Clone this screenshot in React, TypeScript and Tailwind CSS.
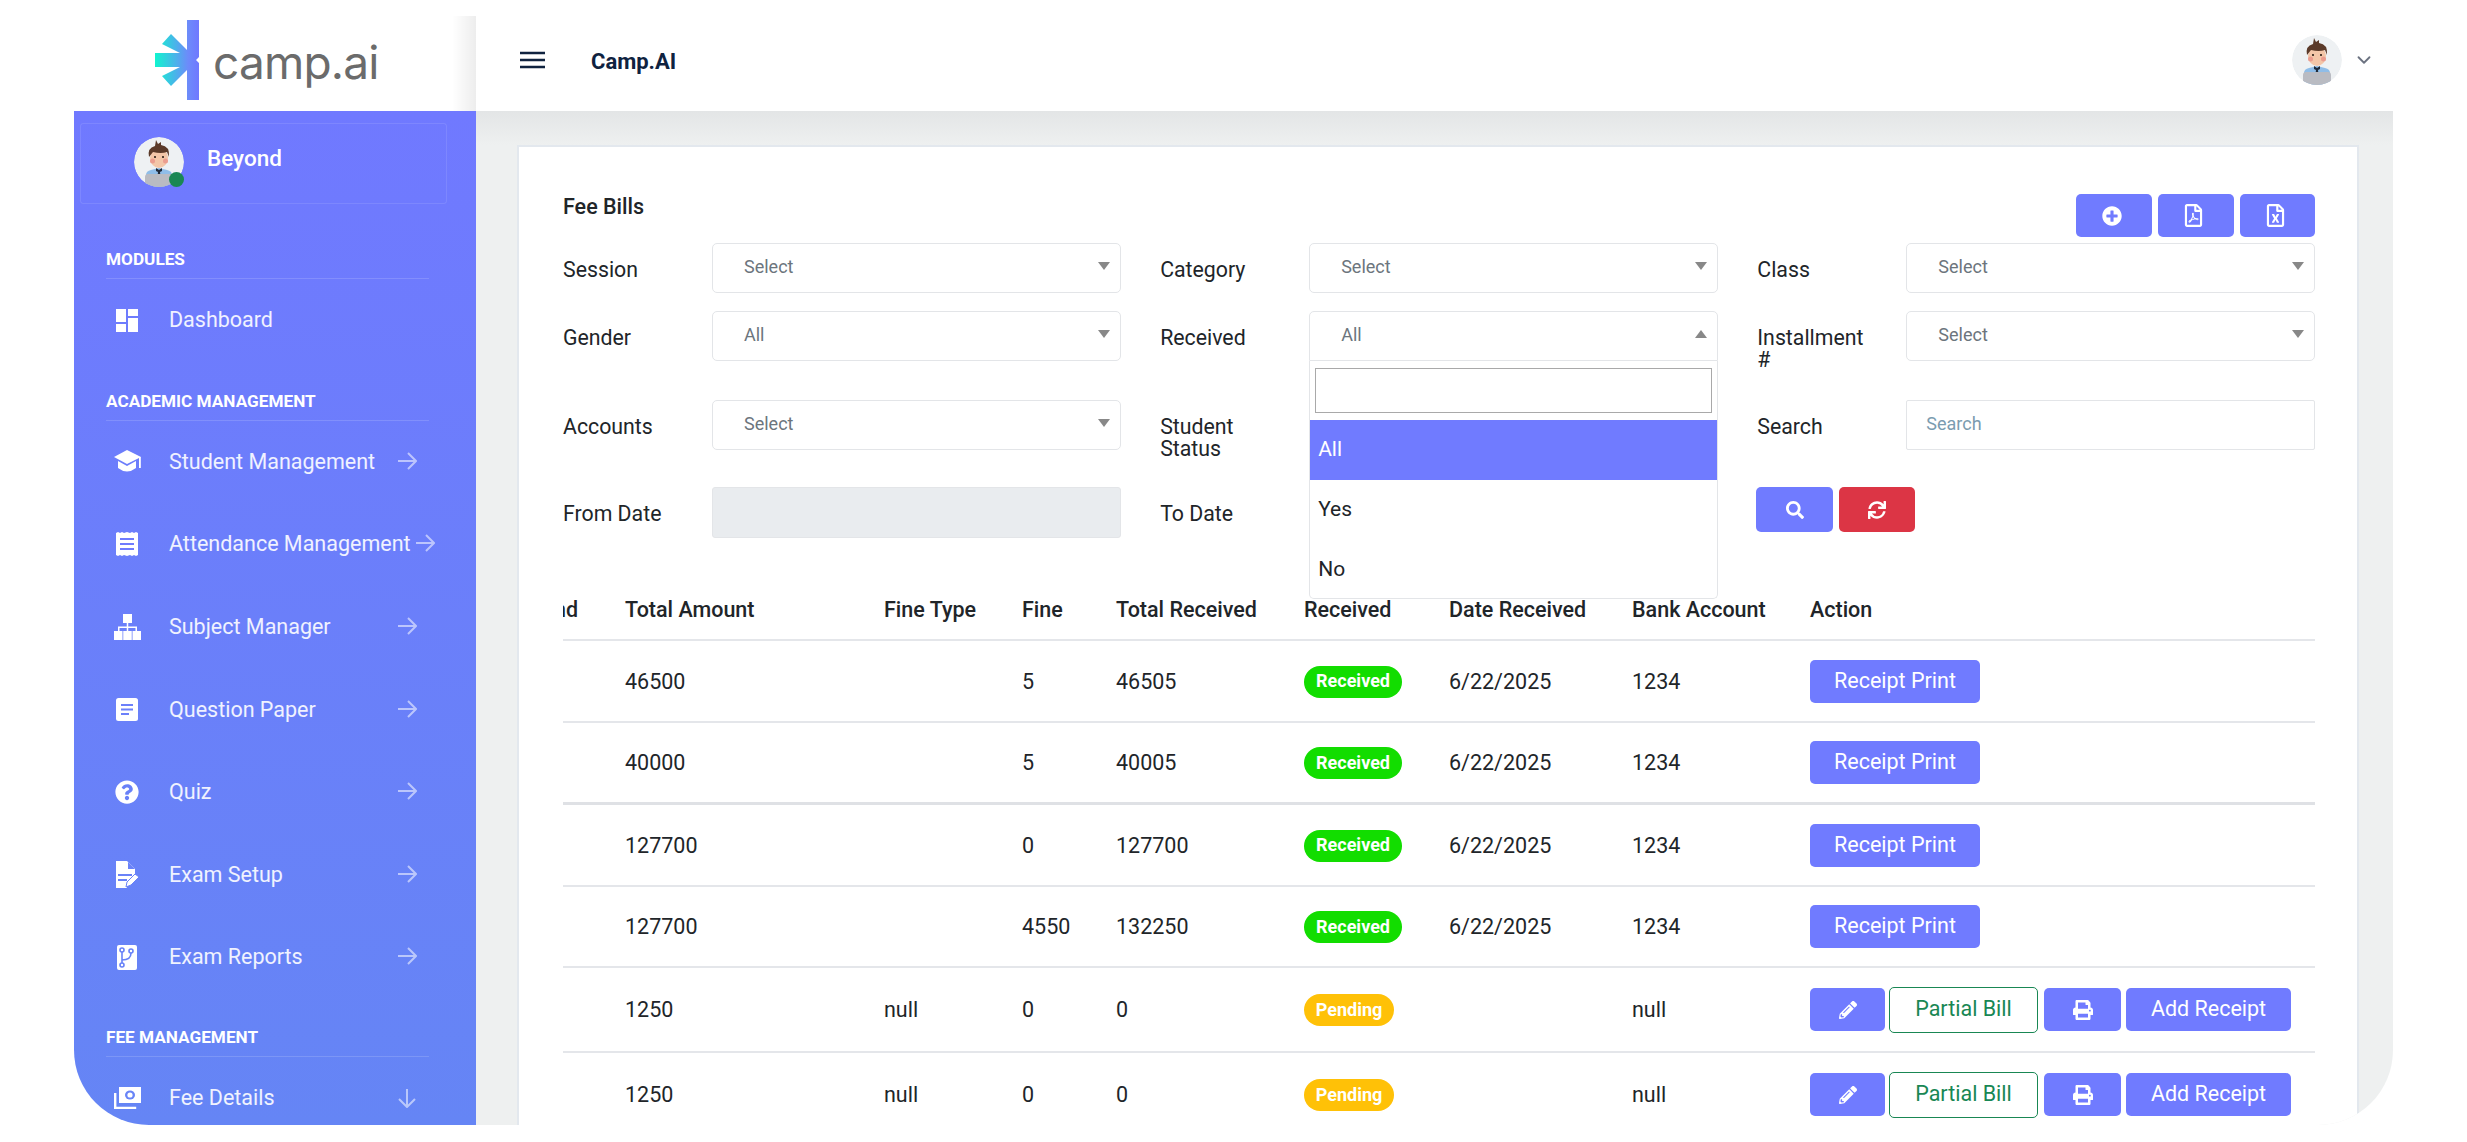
import React from "react";
import { FaQuestionCircle, FaPlusCircle, FaRegFilePdf, FaRegFileExcel, FaSearch, FaSync, FaPencilAlt, FaPrint } from "react-icons/fa";
import { ChevronDown } from "lucide-react";

function Avatar({ size, dot }: { size: number; dot?: boolean }) {
  return (
    <div className="relative shrink-0" style={{ width: size, height: size }}>
      <svg viewBox="0 0 50 50" width={size} height={size}>
        <defs>
          <clipPath id={dot ? "avc1" : "avc2"}><circle cx="25" cy="25" r="25" /></clipPath>
        </defs>
        <g clipPath={`url(#${dot ? "avc1" : "avc2"})`}>
          <circle cx="25" cy="25" r="25" fill="#eef1f3" />
          <path d="M12 50V38q0-4 5-5l8-2 8 2q5 1 5 5v12z" fill="#8fbde8" />
          <path d="M22 31l3 2 3-2 0 3-2 1 1 8h-4l1-8-2-1z" fill="#1f2a3a" />
          <rect x="11" y="37" width="28" height="14" rx="3" fill="#b9bbc2" />
          <ellipse cx="25" cy="21" rx="9" ry="10" fill="#f3c6a8" />
          <circle cx="18.5" cy="24" r="2.5" fill="#eb9d8f" />
          <circle cx="31.5" cy="24" r="2.5" fill="#eb9d8f" />
          <circle cx="21" cy="20" r="1.1" fill="#2b1d16" />
          <circle cx="29" cy="20" r="1.1" fill="#2b1d16" />
          <path d="M15 20q-2-9 6-11l1-6 2 4 3-2 0 3q9 1 8 12l-2-5q-6 2-14 0z" fill="#5b3a29" />
        </g>
      </svg>
      {dot && <div className="absolute right-0 bottom-0 w-[15px] h-[15px] rounded-full bg-[#198754]" />}
    </div>
  );
}

function Logo() {
  return (
    <svg width="45" height="80" viewBox="0 0 45 80" className="shrink-0">
      <defs>
        <linearGradient id="lg" x1="0" x2="1" y1="0" y2="0">
          <stop offset="0" stopColor="#10f5cf" />
          <stop offset="0.75" stopColor="#6d8bfa" />
          <stop offset="1" stopColor="#6f78ff" />
        </linearGradient>
      </defs>
      <path
        fill="url(#lg)"
        d="M32 0H44V37L41 40L44 43V80H32V50L16 66L7 56L25 47H0V33H25L7 24L16 14L32 30Z"
      />
    </svg>
  );
}

const Dash = () => (
  <svg width="22" height="23" viewBox="0 0 22 23" fill="#fff">
    <rect x="0" y="0" width="10" height="13" />
    <rect x="12" y="0" width="10" height="7" />
    <rect x="0" y="15" width="10" height="8" />
    <rect x="12" y="9" width="10" height="14" />
  </svg>
);
const Cap = () => (
  <svg width="27" height="24" viewBox="0 0 27 24" fill="#fff">
    <path d="M13 0L27 7L13 14L0 7z" />
    <path d="M4 11L13 16L22 11V18Q13 25 4 18z" />
    <rect x="25" y="7" width="1.8" height="11" />
  </svg>
);
const Sitemap = () => (
  <svg width="27" height="26" viewBox="0 0 27 26" fill="#fff">
    <rect x="9" y="0" width="9" height="9" />
    <rect x="0" y="17" width="8.5" height="9" />
    <rect x="9.25" y="17" width="8.5" height="9" />
    <rect x="18.5" y="17" width="8.5" height="9" />
    <path d="M12.75 9h1.5v3.5H23V17h-1.5v-3h-7.25v3h-1.5v-3H5.5v3H4v-4.5h8.75z" />
  </svg>
);
const Receipt = () => (
  <svg width="22" height="24" viewBox="0 0 22 24">
    <path fill="#fff" d="M0 1l2-1 2 1 2-1 2 1 3-1 3 1 2-1 2 1 2-1 2 1v22l-2 1-2-1-2 1-2-1-3 1-3-1-2 1-2-1-2 1-2-1z" />
    <path stroke="#6f7bfe" strokeWidth="2" d="M4 7h14M4 12h14M4 17h14" />
  </svg>
);
const Paper = () => (
  <svg width="22" height="23" viewBox="0 0 22 23">
    <rect width="22" height="23" rx="2.5" fill="#fff" />
    <path stroke="#6c80fa" strokeWidth="2" d="M5 7h12M5 11.5h12M5 16h8" />
  </svg>
);
const ExamSetup = () => (
  <svg width="24" height="27" viewBox="0 0 24 27">
    <path fill="#fff" d="M1 0h11l8 8v8l-8 8v3H1z" />
    <path fill="#6a82f8" d="M13 1v7h7zM3 13h14v2H3zM3 18h9v2H3z" />
    <path fill="#fff" stroke="#6a82f8" d="M11 26l1-5 8-8 4 3-8 8z" />
  </svg>
);
const ExamReports = () => (
  <svg width="20" height="25" viewBox="0 0 20 25">
    <rect width="20" height="25" rx="2" fill="#fff" />
    <g fill="none" stroke="#6882f8" strokeWidth="1.6">
      <circle cx="5" cy="5" r="2" />
      <circle cx="5" cy="20" r="2" />
      <circle cx="14" cy="6" r="2" />
      <path d="M5 7v11M5 15q9 0 9-7" />
    </g>
  </svg>
);
const Money = () => (
  <svg width="27" height="22" viewBox="0 0 27 22">
    <path fill="none" stroke="#fff" strokeWidth="2.4" d="M1.2 6v15h21" />
    <rect x="5" y="0" width="22" height="16" fill="#fff" />
    <ellipse cx="16" cy="8" rx="5" ry="4.5" fill="#6884f7" />
    <ellipse cx="16" cy="8" rx="2.6" ry="2.6" fill="#fff" />
  </svg>
);
const ArrowR = () => (
  <svg width="20" height="20" viewBox="0 0 20 20" fill="none" stroke="#ffffff" strokeOpacity="0.55" strokeWidth="2" className="shrink-0 mb-[2px]">
    <path d="M1 10H19M11 2l8 8-8 8" />
  </svg>
);
const ArrowD = () => (
  <svg width="20" height="20" viewBox="0 0 20 20" fill="none" stroke="#ffffff" strokeOpacity="0.55" strokeWidth="2" className="shrink-0 ml-[2px]">
    <path d="M10 1V19M2 11l8 8 8-8" />
  </svg>
);

function NavItem({ icon, label, down, noArrow }: { icon: React.ReactNode; label: string; down?: boolean; noArrow?: boolean }) {
  return (
    <div className="h-[82.6px] pl-[32px] pr-[59px] flex items-center text-[21.5px] text-white/90 whitespace-nowrap">
      <div className="w-[42px] flex justify-center shrink-0">{icon}</div>
      <span className="ml-[21px]">{label}</span>
      <span className="ml-auto pl-[4px] shrink-0">{noArrow ? null : down ? <ArrowD /> : <ArrowR />}</span>
    </div>
  );
}

function SectionHead({ label, className }: { label: string; className: string }) {
  return (
    <div className={`ml-[32px] w-[323px] h-[35px] border-b border-white/15 text-[17.2px] font-bold text-white leading-[24px] pt-[3px] ${className}`}>{label}</div>
  );
}

function Caret({ up }: { up?: boolean }) {
  return (
    <svg width="12" height="8" viewBox="0 0 12 8" className="ml-auto shrink-0" fill="#888">
      {up ? <path d="M6 0l6 8H0z" /> : <path d="M0 0h12L6 8z" />}
    </svg>
  );
}

function Select({ value, open }: { value: string; open?: boolean }) {
  return (
    <div className={`h-[50px] border border-[#e3e5e8] bg-white flex items-center pl-[31px] pr-[10px] pb-[4px] text-[18px] text-[#6c757d] ${open ? "rounded-t-[5px]" : "rounded-[5px]"}`}>
      <span>{value}</span>
      <Caret up={open} />
    </div>
  );
}

function Field({ label, children }: { label: React.ReactNode; children: React.ReactNode }) {
  return (
    <div className="flex items-start">
      <div className="w-[149px] shrink-0 pt-[16px] pr-[30px] text-[21.3px] leading-[22px] text-[#212529]">{label}</div>
      <div className="flex-1 min-w-0 relative">{children}</div>
    </div>
  );
}

const blue = "bg-[#707bff] text-white rounded-[5px] flex items-center justify-center shrink-0";

function Badge({ kind }: { kind: "r" | "p" }) {
  return kind === "r" ? (
    <span className="inline-flex items-center justify-center w-[98px] h-[32px] pb-[2px] rounded-full bg-[#12dd00] text-white text-[18px] font-bold">Received</span>
  ) : (
    <span className="inline-flex items-center justify-center w-[90px] h-[32px] pb-[2px] rounded-full bg-[#ffc107] text-white text-[18px] font-bold">Pending</span>
  );
}

type Row = { amt: string; ft: string; fine: string; tr: string; kind: "r" | "p"; date: string; bank: string; h: string; thick?: boolean };
const rows: Row[] = [
  { amt: "46500", ft: "", fine: "5", tr: "46505", kind: "r", date: "6/22/2025", bank: "1234", h: "h-[82px]" },
  { amt: "40000", ft: "", fine: "5", tr: "40005", kind: "r", date: "6/22/2025", bank: "1234", h: "h-[82px]", thick: true },
  { amt: "127700", ft: "", fine: "0", tr: "127700", kind: "r", date: "6/22/2025", bank: "1234", h: "h-[82px]" },
  { amt: "127700", ft: "", fine: "4550", tr: "132250", kind: "r", date: "6/22/2025", bank: "1234", h: "h-[81px]" },
  { amt: "1250", ft: "null", fine: "0", tr: "0", kind: "p", date: "", bank: "null", h: "h-[85px]" },
  { amt: "1250", ft: "null", fine: "0", tr: "0", kind: "p", date: "", bank: "null", h: "h-[85px]" },
];

const headers = ["Total Amount", "Fine Type", "Fine", "Total Received", "Received", "Date Received", "Bank Account", "Action"];

export default function App() {
  return (
    <div className="w-full h-[1142px] bg-white px-[74px] font-[Roboto,sans-serif] overflow-hidden">
      <div className="h-[1125px] flex rounded-b-[75px] overflow-hidden">
        {/* left column */}
        <div className="w-[402px] shrink-0 flex flex-col">
          <div className="mt-[16px] h-[95px] pb-[7px] flex items-center pl-[81px] bg-[linear-gradient(to_left,rgba(0,0,0,0.07),transparent_24px)]">
            <Logo />
            <span className="ml-[13px] mt-[3px] font-[Inter,sans-serif] text-[46px] tracking-[-0.8px] text-[#6b6b6b] leading-none">camp.ai</span>
          </div>
          <div className="flex-1 bg-[linear-gradient(to_bottom,#7079ff,#6585f5)] pt-[12px] overflow-hidden">
            <div className="ml-[6px] w-[367px] h-[81px] border border-white/10 rounded-[3px] flex items-center pl-[53px] pb-[4px]">
              <Avatar size={50} dot />
              <span className="ml-[23px] mb-[6px] text-[22.5px] font-medium text-white">Beyond</span>
            </div>
            <SectionHead label="MODULES" className="mt-[40px]" />
            <NavItem icon={<Dash />} label="Dashboard" noArrow />
            <SectionHead label="ACADEMIC MANAGEMENT" className="mt-[24px]" />
            <NavItem icon={<Cap />} label="Student Management" />
            <NavItem icon={<Receipt />} label="Attendance Management" />
            <NavItem icon={<Sitemap />} label="Subject Manager" />
            <NavItem icon={<Paper />} label="Question Paper" />
            <NavItem icon={<FaQuestionCircle size={24} color="#fff" />} label="Quiz" />
            <NavItem icon={<ExamSetup />} label="Exam Setup" />
            <NavItem icon={<ExamReports />} label="Exam Reports" />
            <SectionHead label="FEE MANAGEMENT" className="mt-[23px]" />
            <NavItem icon={<Money />} label="Fee Details" down />
          </div>
        </div>

        {/* right column */}
        <div className="flex-1 min-w-0 flex flex-col">
          <header className="relative z-10 mt-[16px] h-[95px] shrink-0 bg-white flex items-center pl-[44px] pr-[18px] pb-[7px]">
            <svg width="25" height="18" viewBox="0 0 25 18" stroke="#10233f" strokeWidth="2.4">
              <path d="M0 2h25M0 9h25M0 16h25" />
            </svg>
            <span className="ml-[46px] mt-[2px] text-[22px] font-bold text-[#0f2240]">Camp.AI</span>
            <div className="ml-auto flex items-center">
              <Avatar size={50} />
              <ChevronDown size={22} color="#6b7280" className="ml-[11px]" />
            </div>
          </header>
          <main className="flex-1 min-h-0 bg-[linear-gradient(to_bottom,#e3e5e6,#eef0f0_34px)] pl-[41px] pr-[34px] pt-[34px]">
            <div className="h-full bg-white border-t-2 border-x-2 border-[#e3e8ee] pl-[44px] pr-[42px] pt-[47px] overflow-hidden">
              <div className="h-[49px] flex items-start">
                <div className="h-[26px] flex items-center text-[21.5px] font-medium text-[#212529]">Fee Bills</div>
                <div className="ml-auto flex gap-[6px]">
                  <button className={`${blue} w-[76px] h-[43px] pr-[4px]`}><FaPlusCircle size={20} /></button>
                  <button className={`${blue} w-[76px] h-[43px] pr-[5px]`}><FaRegFilePdf size={23} /></button>
                  <button className={`${blue} w-[75px] h-[43px] pr-[4px]`}><FaRegFileExcel size={23} /></button>
                </div>
              </div>
              <div className="grid grid-cols-3 gap-x-[39.5px] grid-rows-[68px_89px_87px_93px]">
                <Field label="Session"><Select value="Select" /></Field>
                <Field label="Category"><Select value="Select" /></Field>
                <Field label="Class"><Select value="Select" /></Field>

                <Field label="Gender"><Select value="All" /></Field>
                <Field label="Received">
                  <Select value="All" open />
                  <div className="absolute z-20 top-full left-0 right-0 h-[238px] bg-white border border-t-0 border-[#e3e5e8] rounded-b-[5px] text-[21px] text-[#212529]">
                    <div className="px-[5px] pt-[7px] pb-[7px]">
                      <input aria-label="Filter" className="block w-full h-[45px] border border-[#a9a9a9] outline-none" />
                    </div>
                    <div className="h-[60px] bg-[#707bff] text-white flex items-center pl-[8px]">All</div>
                    <div className="h-[60px] flex items-center pl-[8px]">Yes</div>
                    <div className="h-[60px] flex items-center pl-[8px]">No</div>
                  </div>
                </Field>
                <Field label={<>Installment #</>}><Select value="Select" /></Field>

                <Field label="Accounts"><Select value="Select" /></Field>
                <Field label={<>Student Status</>}><div className="h-[50px]" /></Field>
                <Field label="Search">
                  <div className="h-[50px] border border-[#e3e5e8] rounded-[2px] flex items-center pl-[19px] pb-[4px] text-[18px] text-[#7b9cb0]">Search</div>
                </Field>

                <Field label="From Date"><div className="h-[51px] bg-[#e9ecef] border border-[#e3e5e8] rounded-[3px]" /></Field>
                <Field label="To Date"><div className="h-[51px]" /></Field>
                <div className="flex gap-[6px] items-start -ml-[1px]">
                  <button className={`${blue} w-[77px] h-[45px]`}><FaSearch size={18} /></button>
                  <button className="bg-[#dc3545] text-white rounded-[5px] flex items-center justify-center w-[76px] h-[45px]"><FaSync size={18} /></button>
                </div>
              </div>

              <table className="w-[1752px] table-fixed border-separate border-spacing-0 text-[21.5px] text-[#212529]">
                <colgroup>
                  <col className="w-[62px]" />
                  <col className="w-[259px]" />
                  <col className="w-[138px]" />
                  <col className="w-[94px]" />
                  <col className="w-[188px]" />
                  <col className="w-[145px]" />
                  <col className="w-[183px]" />
                  <col className="w-[178px]" />
                  <col className="w-[505px]" />
                </colgroup>
                <thead>
                  <tr>
                    <th className="h-[61px] border-b-2 border-[#e4e6ea] p-0 pt-[2px] font-medium text-left">
                      <div className="w-[15px] flex justify-end overflow-hidden whitespace-nowrap">Fund</div>
                    </th>
                    {headers.map((h) => (
                      <th key={h} className="h-[61px] border-b-2 border-[#e4e6ea] p-0 pt-[2px] font-medium text-left whitespace-nowrap">{h}</th>
                    ))}
                  </tr>
                </thead>
                <tbody>
                  {rows.map((r, i) => {
                    const cell = `${r.h} p-0 border-b-2 ${r.thick ? "border-b-[3px] border-[#dfe1e5]" : "border-[#e4e6ea]"}`;
                    const text = `${cell} pt-[2px]`;
                    return (
                      <tr key={i}>
                        <td className={cell} />
                        <td className={text}>{r.amt}</td>
                        <td className={text}>{r.ft}</td>
                        <td className={text}>{r.fine}</td>
                        <td className={text}>{r.tr}</td>
                        <td className={cell}><Badge kind={r.kind} /></td>
                        <td className={text}>{r.date}</td>
                        <td className={text}>{r.bank}</td>
                        <td className={cell}>
                          {r.kind === "r" ? (
                            <button className={`${blue} w-[170px] h-[43px] text-[21.5px]`}>Receipt Print</button>
                          ) : (
                            <div className="flex items-center">
                              <button className={`${blue} w-[75px] h-[43px]`}><FaPencilAlt size={18} /></button>
                              <button className="ml-[4px] w-[149px] h-[46px] border-[1.5px] border-[#198754] text-[#198754] rounded-[5px] text-[21.5px] bg-white">Partial Bill</button>
                              <button className={`${blue} ml-[6px] w-[77px] h-[43px]`}><FaPrint size={20} /></button>
                              <button className={`${blue} ml-[5px] w-[165px] h-[43px] text-[21.5px]`}>Add Receipt</button>
                            </div>
                          )}
                        </td>
                      </tr>
                    );
                  })}
                </tbody>
              </table>
            </div>
          </main>
        </div>
      </div>
    </div>
  );
}
